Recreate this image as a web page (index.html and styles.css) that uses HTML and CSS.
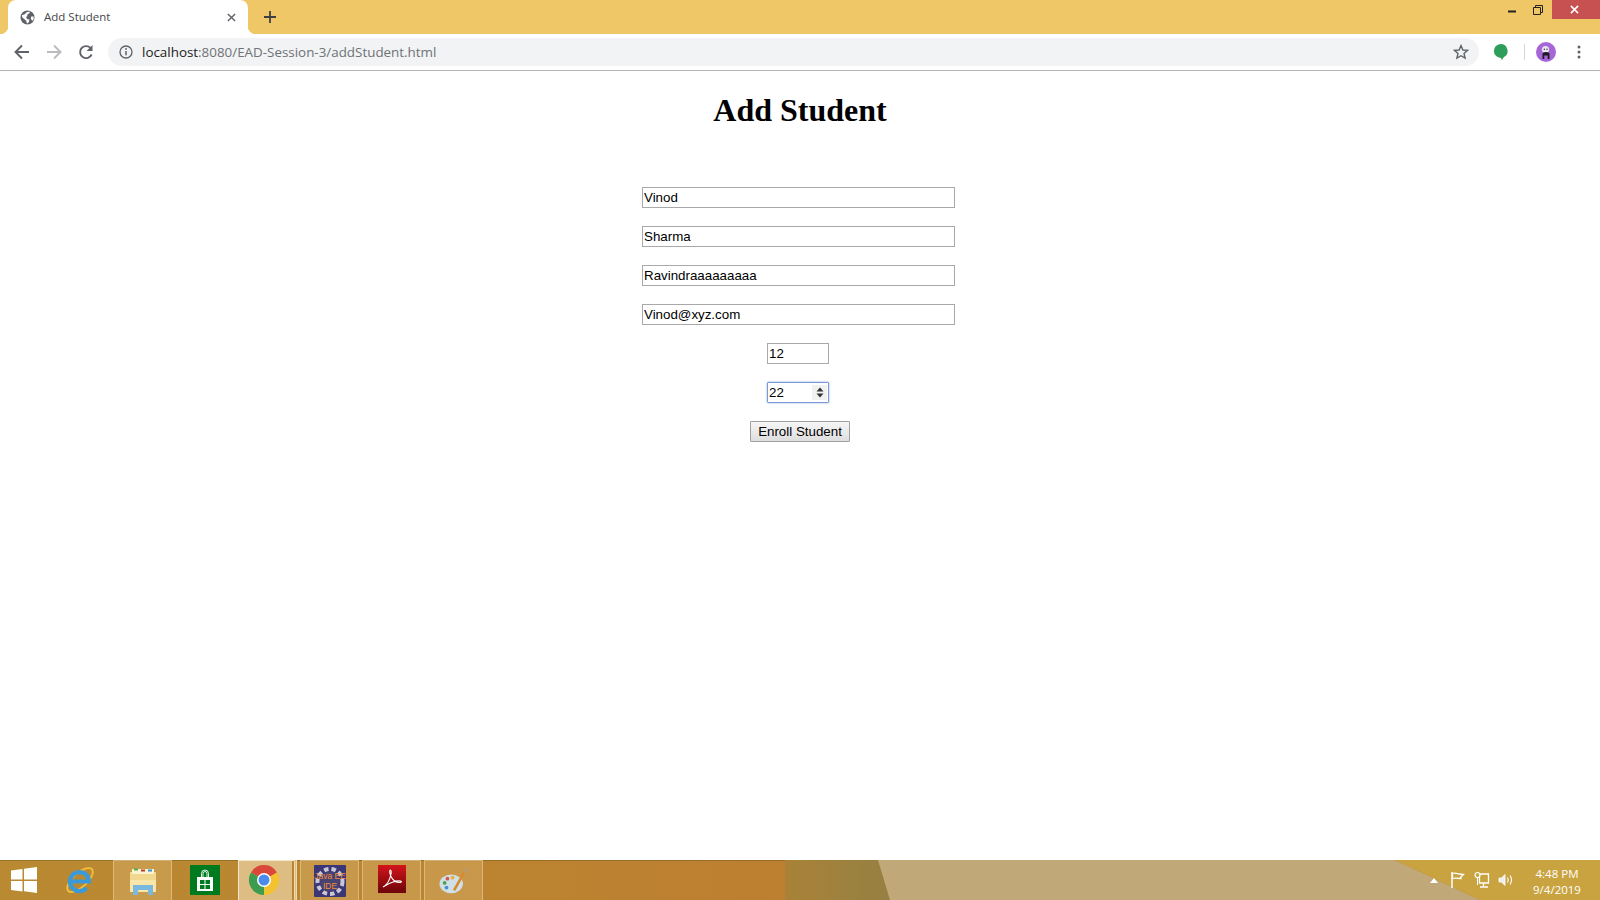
FILE: index.html
```html
<!DOCTYPE html>
<html lang="en">
<head>
    <meta charset="UTF-8">
    <title>Add Student</title>
    <link rel="stylesheet" href="styles.css">
</head>
<body>
    <!-- Browser chrome -->
    <header class="browser">
        <div class="tabstrip">
            <div class="tab">
                <svg class="tab-icon" viewBox="0 0 16 16"><circle cx="8" cy="8" r="7.5" fill="#5f6368"/><path d="M2 5.5 5 4.5 7.5 2 10.5 1.5 10 3.5 7.5 5 8 6.5 6.5 7.5 7.5 9.5 10 10 9.5 13 7.5 14.5 6.5 11.5 4.5 9.5 2.5 8z" fill="#fff"/><path d="M12 7h2.500v3L13 11.500 11.500 9z" fill="#fff"/></svg>
                <span class="tab-title">Add Student</span>
                <svg class="tab-close" viewBox="0 0 10 10"><path d="M1 1l8 8M9 1l-8 8" stroke="#5f6368" stroke-width="1.6"/></svg>
            </div>
            <svg class="new-tab" viewBox="0 0 12 12"><path d="M6 0v12M0 6h12" stroke="#3c3f43" stroke-width="1.8"/></svg>
            <div class="window-controls">
                <svg class="win-min" viewBox="0 0 8 3"><rect width="8" height="2" y="0.5" fill="#222"/></svg>
                <svg class="win-restore" viewBox="0 0 10 10"><path d="M0.5 2.5h7v7h-7zM2.5 2.5V0.5h7v7H7.5" fill="none" stroke="#222"/></svg>
                <div class="win-close"><svg viewBox="0 0 10 10"><path d="M1 1l8 8M9 1l-8 8" stroke="#fff" stroke-width="1.7"/></svg></div>
            </div>
        </div>
        <div class="toolbar">
            <svg class="nav-btn" viewBox="0 0 16 16"><path d="M15 8H2.5M8 1.5 1.5 8 8 14.5" fill="none" stroke="#5f6368" stroke-width="1.9"/></svg>
            <svg class="nav-btn" viewBox="0 0 16 16"><path d="M1 8h12.5M8 1.5 14.5 8 8 14.5" fill="none" stroke="#b9bbbe" stroke-width="1.9"/></svg>
            <svg class="nav-btn" viewBox="0 0 16 16"><path d="M13.6 10.5A6 6 0 1 1 12.3 3.8" fill="none" stroke="#5f6368" stroke-width="1.9"/><path d="M14.5 1v6h-6z" fill="#5f6368"/></svg>
            <div class="omnibox">
                <svg class="info-icon" viewBox="0 0 14 14"><circle cx="7" cy="7" r="6" fill="none" stroke="#5f6368" stroke-width="1.3"/><path d="M7 6v4.2" stroke="#5f6368" stroke-width="1.5"/><circle cx="7" cy="4" r="0.9" fill="#5f6368"/></svg>
                <span class="url"><span class="url-host">localhost</span>:8080/EAD-Session-3/addStudent.html</span>
                <svg class="star-icon" viewBox="0 0 16 16"><path d="M8 1.6 9.9 6l4.7.4-3.6 3.1 1.1 4.6L8 11.7l-4.1 2.4L5 9.5 1.4 6.4 6.1 6z" fill="none" stroke="#5f6368" stroke-width="1.4"/></svg>
            </div>
            <svg class="ext-icon" viewBox="0 0 14 16"><path d="M7 0.5a6.5 6.5 0 0 1 3.2 12.2L8.2 15.6 7.6 13.5A6.5 6.5 0 0 1 7 0.5z" fill="#2f9e5b"/></svg>
            <div class="toolbar-sep"></div>
            <svg class="avatar" viewBox="0 0 20 20"><circle cx="10" cy="10" r="10" fill="#a666d8"/><circle cx="9.5" cy="7.5" r="3.6" fill="#e9e4ee"/><path d="M6.5 17v-5q0-2 3.5-2t3.5 2v5h-1.8v-3.5H8.3V17z" fill="#1c1a20"/><circle cx="8.3" cy="7.3" r=".7" fill="#333"/><circle cx="11" cy="7.3" r=".7" fill="#333"/></svg>
            <svg class="menu-icon" viewBox="0 0 4 14"><circle cx="2" cy="2" r="1.5" fill="#5f6368"/><circle cx="2" cy="7" r="1.5" fill="#5f6368"/><circle cx="2" cy="12" r="1.5" fill="#5f6368"/></svg>
        </div>
    </header>

    <!-- Page content -->
    <main class="page">
        <h1>Add Student</h1>
        <form class="student-form">
            <input class="text-field" type="text" value="Vinod">
            <input class="text-field" type="text" value="Sharma">
            <input class="text-field" type="text" value="Ravindraaaaaaaaa">
            <input class="text-field" type="text" value="Vinod@xyz.com">
            <input class="short-field" type="text" value="12">
            <div class="spin-field">
                <input class="spin-input" type="text" value="22">
                <span class="spin-btn"><svg viewBox="0 0 8 11"><path d="M4 0.5 7.5 4.5h-7zM4 10.5 0.5 6.5h7z" fill="#333"/></svg></span>
            </div>
            <button class="submit-btn" type="button">Enroll Student</button>
        </form>
    </main>

    <!-- Windows taskbar -->
    <footer class="taskbar">
        <svg class="wallpaper" viewBox="0 0 1600 40" preserveAspectRatio="none">
            <defs>
                <linearGradient id="olive" x1="0" y1="0" x2="1" y2="0"><stop offset="0" stop-color="#a98238"/><stop offset="1" stop-color="#958042"/></linearGradient>
            </defs>
            <polygon points="785,0 878,0 890,40 785,40" fill="url(#olive)"/>
            <polygon points="878,0 1395,0 1480,40 890,40" fill="#c1a878"/>
            <polygon points="1395,0 1600,0 1600,40 1480,40" fill="#c9a340"/>
        </svg>
        <div class="task-start">
            <svg class="start-logo" viewBox="0 0 26 26"><path d="M0 3.6 11.5 2v10.5H0zM13 1.8 26 0v12.5H13zM0 14h11.5v10.5L0 22.9zM13 14h13v12l-13-1.800z" fill="#fff"/></svg>
        </div>
        <div class="task-item task-ie">
            <svg class="task-icon" viewBox="0 0 30 30"><ellipse cx="15" cy="15" rx="16" ry="7" transform="rotate(-42 15 15)" fill="none" stroke="#eebc3a" stroke-width="2"/><path d="M6.500 16.500H24A9.500 9.500 0 1 0 21.500 23" fill="none" stroke="#3a9ad9" stroke-width="4.200"/></svg>
        </div>
        <div class="task-item task-active">
            <svg class="task-icon" viewBox="0 0 30 30"><path d="M2 6h26v20H2z" fill="#f0d88f"/><path d="M4 3h22v5H4z" fill="#fbf3d0"/><rect x="6" y="2.500" width="4" height="2" fill="#4caf50"/><rect x="13" y="3.500" width="4" height="2" fill="#c0392b"/><rect x="20" y="3.500" width="4" height="2" fill="#3a8fd0"/><path d="M2 14h26v12H2z" fill="#f8e6ab"/><path d="M5 19h20v10h-5v-5H10v5H5z" fill="#7ab8e0"/></svg>
        </div>
        <div class="task-item task-store">
            <svg class="task-icon" viewBox="0 0 30 30"><rect width="30" height="30" fill="#007a1e"/><path d="M11.500 12V8.500a3.500 3.500 0 0 1 7 0V12M13 12V8.500a2 2 0 0 1 4 0V12" fill="none" stroke="#fff" stroke-width=".9"/><path d="M7 12h16v14H7z" fill="#fff"/><path d="M10 15h4.500v4H10zM15.500 15H20v4h-4.500zM10 20h4.500v4H10zM15.500 20H20v4h-4.500z" fill="#007a1e"/></svg>
        </div>
        <div class="task-item task-current">
            <svg class="task-icon" viewBox="0 0 30 30"><circle cx="15" cy="15" r="15" fill="#e0c040"/><path d="M15 15 2 7.500A15 15 0 0 1 28 7.500z" fill="#d9483b"/><path d="M15 15 2 7.500A15 15 0 0 0 15 30z" fill="#3c9d50"/><path d="M15 15 28 7.500A15 15 0 0 1 15 30z" fill="#f2c230"/><circle cx="15" cy="15" r="7" fill="#fff"/><circle cx="15" cy="15" r="5.500" fill="#4b8bec"/></svg>
        </div>
        <div class="task-item task-running">
            <svg class="eclipse-icon" viewBox="0 0 32 32"><rect width="32" height="32" rx="1" fill="#3c3576"/><circle cx="16" cy="16.500" r="12.500" fill="none" stroke="#c8c8d4" stroke-width="4" stroke-dasharray="4.500 3"/><circle cx="16" cy="16.500" r="10" fill="#4a4270"/><text class="eclipse-text" x="16" y="14">Java EE</text><text class="eclipse-text" x="16" y="24">IDE</text></svg>
        </div>
        <div class="task-item task-running">
            <svg class="pdf-icon" viewBox="0 0 28 28"><defs><linearGradient id="pdfFill" x1="0" y1="0" x2="0" y2="1"><stop offset="0" stop-color="#d4141c"/><stop offset="1" stop-color="#6c0508"/></linearGradient></defs><rect width="28" height="28" fill="url(#pdfFill)"/><path d="M5 22c4-2 7-8 8-13 .4-2 .2-4-.6-4-1 0-.8 3 .4 6 1.500 3.500 4 6 8 6.500 2 .2 3-.5 2.500-1-.8-.8-5-.5-9 .8-3.500 1.200-7 3.500-9.300 4.700z" fill="none" stroke="#fff" stroke-width="1.100"/></svg>
        </div>
        <div class="task-item task-running">
            <svg class="task-icon" viewBox="0 0 32 32"><ellipse cx="13" cy="19" rx="12.500" ry="10" fill="#cfe0e8"/><circle cx="6" cy="18" r="2" fill="#4fa04f"/><circle cx="9" cy="13.500" r="2" fill="#d9534f"/><circle cx="14.500" cy="12.500" r="2" fill="#e8b030"/><circle cx="8" cy="23" r="2" fill="#4a8fd0"/><path d="M16 26 28 5" stroke="#d98a2b" stroke-width="2.800"/><path d="M26.500 7 28 1.500l3 1.500-2 5z" fill="#b89a70"/></svg>
        </div>
        <div class="tray">
            <svg class="tray-caret" viewBox="0 0 8 5"><path d="M4 0 8 5H0z" fill="#fff"/></svg>
            <svg class="tray-icon" viewBox="0 0 16 18"><path d="M2 1v16" stroke="#fff" stroke-width="1.500"/><path d="M2.500 2.500c3-1 5 .5 7 .5l4 .5-3 3 .5 1c-3 0-5-1-8.500 0z" fill="#c9a340" stroke="#fff" stroke-width="1.300"/></svg>
            <svg class="tray-icon" viewBox="0 0 16 18"><path d="M5.500 3h9v9h-9zM9.500 12v3M6 16h8" fill="none" stroke="#fff" stroke-width="1.300"/><circle cx="3.500" cy="4" r="2.500" fill="#c9a83f" stroke="#fff" stroke-width="1.200"/><path d="M3.500 6.500V14" stroke="#fff"/></svg>
            <svg class="tray-icon" viewBox="0 0 16 18"><path d="M1 7h2.500L7 3.500v11L3.500 11H1z" fill="#eee" stroke="#fff" stroke-width=".8"/><path d="M9.500 6.500q1.500 2.500 0 5M12 4.500q3 4.500 0 9" fill="none" stroke="#fff" stroke-width="1.100"/></svg>
            <div class="tray-clock">
                <span>4:48 PM</span>
                <span>9/4/2019</span>
            </div>
        </div>
    </footer>
</body>
</html>
```

FILE: styles.css
```css
/* General styles */
html, body {
    height: 100%;
}

body {
    margin: 0;
    height: 100vh;
    display: flex;
    flex-direction: column;
    overflow: hidden;
    background-color: #fff;
    font-family: "Liberation Sans", Arial, sans-serif;
}

/* Tab strip */
.browser {
    flex: none;
    border-bottom: 1px solid #b4b4b4;
}

.tabstrip {
    height: 34px;
    display: flex;
    align-items: center;
    padding-left: 8px;
    background-color: #efc766;
}

.tab {
    position: relative;
    width: 240px;
    height: 34px;
    box-sizing: border-box;
    padding: 0 12px 0 13px;
    display: flex;
    align-items: center;
    background-color: #fff;
    border-radius: 8px 8px 0 0;
}

.tab::before,
.tab::after {
    content: "";
    position: absolute;
    bottom: 0;
    width: 8px;
    height: 8px;
}

.tab::before {
    left: -8px;
    background-image: radial-gradient(circle at 0 0, #efc766 8px, #fff 8.5px);
}

.tab::after {
    right: -8px;
    background-image: radial-gradient(circle at 100% 0, #efc766 8px, #fff 8.5px);
}

.tab-icon {
    width: 15px;
    height: 15px;
    margin-left: -1px;
}

.tab-title {
    flex: 1;
    margin: 0 0 2px 9px;
    font-family: "Open Sans", sans-serif;
    font-size: 11.5px;
    color: #45474a;
}

.tab-close {
    width: 9px;
    height: 9px;
}

.new-tab {
    width: 12px;
    height: 12px;
    margin-left: 16px;
}

.window-controls {
    margin-left: auto;
    align-self: flex-start;
    display: flex;
    align-items: flex-start;
}

.win-min {
    width: 8px;
    height: 3px;
    margin: 10px 17px 0 0;
}

.win-restore {
    width: 10px;
    height: 10px;
    margin: 5px 9px 0 0;
}

.win-close {
    width: 48px;
    height: 19px;
    box-sizing: border-box;
    padding-right: 3px;
    display: flex;
    align-items: center;
    justify-content: center;
    background-color: #c75050;
}

.win-close svg {
    width: 9px;
    height: 9px;
}

/* Toolbar */
.toolbar {
    height: 36px;
    box-sizing: border-box;
    padding: 0 15px 0 14px;
    display: flex;
    align-items: center;
    background-color: #fff;
}

.nav-btn {
    width: 16px;
    height: 16px;
    margin-right: 16px;
}

.omnibox {
    width: 1371px;
    height: 28px;
    margin-left: -2px;
    box-sizing: border-box;
    padding: 0 10px 0 11px;
    display: flex;
    align-items: center;
    background-color: #f1f3f4;
    border-radius: 14px;
}

.info-icon {
    width: 14px;
    height: 14px;
}

.url {
    flex: 1;
    margin-left: 9px;
    font-family: "Open Sans", sans-serif;
    font-size: 13.4px;
    color: #6f7276;
}

.url-host {
    color: #222;
}

.star-icon {
    width: 16px;
    height: 16px;
}

.ext-icon {
    width: 15px;
    height: 18px;
    margin-left: 14px;
}

.toolbar-sep {
    width: 1px;
    height: 16px;
    margin-left: 16px;
    background-color: #d6d6d6;
}

.avatar {
    width: 20px;
    height: 20px;
    margin-left: 11px;
}

.menu-icon {
    width: 4px;
    height: 14px;
    margin-left: 21px;
}

/* Page content */
.page {
    flex: 1;
    min-height: 0;
}

h1 {
    margin: 21px 0 0;
    font-family: "Liberation Serif", "Times New Roman", serif;
    font-size: 32px;
    font-weight: bold;
    line-height: 37px;
    text-align: center;
    color: #000;
}

.student-form {
    margin-top: 58px;
    display: flex;
    flex-direction: column;
    align-items: center;
    gap: 18px;
}

.student-form input,
.submit-btn {
    font-family: "Liberation Sans", Arial, sans-serif;
    font-size: 13.33px;
    color: #000;
}

.text-field,
.short-field {
    height: 21px;
    box-sizing: border-box;
    padding: 1px 1px;
    border: 1px solid #a9a9a9;
    outline: none;
    margin-right: 3px;
}

.text-field {
    width: 313px;
}

.short-field {
    width: 62px;
    margin-right: 4px;
}

.spin-field {
    width: 62px;
    height: 21px;
    margin-right: 4px;
    box-sizing: border-box;
    padding-right: 1px;
    display: flex;
    align-items: center;
    border: 1px solid #7b9bd8;
    box-shadow: 0 0 2px #7b9bd8;
    border-radius: 1px;
}

.spin-input {
    flex: 1;
    min-width: 0;
    padding: 0 1px;
    border: none;
    outline: none;
}

.spin-btn {
    width: 15px;
    height: 15px;
    display: flex;
    align-items: center;
    justify-content: center;
    background-color: #f1f1f1;
}

.spin-btn svg {
    width: 8px;
    height: 11px;
}

.submit-btn {
    width: 100px;
    height: 21px;
    padding: 0;
    border: 1px solid #a0a0a0;
    border-radius: 1px;
    background-image: linear-gradient(#f6f6f6, #dedede);
}

/* Taskbar */
.taskbar {
    position: relative;
    flex: none;
    height: 40px;
    display: flex;
    align-items: stretch;
    gap: 3px;
    background-image: linear-gradient(90deg, #b98a32, #bd7f30 50%);
    box-shadow: inset 0 1px 0 rgba(120, 90, 40, 0.5);
}

.wallpaper {
    position: absolute;
    left: 0;
    top: 0;
    width: 100%;
    height: 100%;
}

.task-start,
.task-item,
.tray {
    position: relative;
}

.task-start {
    width: 48px;
    display: flex;
    align-items: center;
    justify-content: center;
}

.start-logo {
    width: 26px;
    height: 26px;
}

.task-item {
    width: 59px;
    box-sizing: border-box;
    display: flex;
    align-items: center;
    justify-content: center;
}

.task-icon {
    width: 30px;
    height: 30px;
}

.eclipse-icon {
    width: 32px;
    height: 32px;
}

.pdf-icon {
    width: 28px;
    height: 28px;
    margin-bottom: 4px;
}

.task-ie {
    padding-right: 2px;
}

.task-store {
    width: 60px;
}

.task-active,
.task-running {
    background-color: rgba(240, 210, 150, 0.25);
    border: 1px solid rgba(240, 215, 165, 0.5);
    border-bottom: none;
}

.task-current {
    padding-right: 5px;
    border-right: 3px double rgba(240, 225, 190, 0.8);
    background-image: linear-gradient(90deg, rgba(245, 225, 185, 0.6) 54px, transparent 54px);
    box-shadow: inset 2px 2px 0 -1px #f3e7cc;
}

.eclipse-text {
    font-family: "Liberation Sans", Arial, sans-serif;
    font-size: 8.5px;
    text-anchor: middle;
    fill: #f0903c;
}

.tray {
    margin-left: auto;
    display: flex;
    align-items: center;
    padding-right: 13px;
}

.tray-caret {
    width: 8px;
    height: 5px;
    margin-right: 12px;
}

.tray-icon {
    width: 16px;
    height: 18px;
    margin-right: 8px;
}

.tray-clock {
    width: 60px;
    margin: 3px 0 0 5px;
    display: flex;
    flex-direction: column;
    align-items: center;
    gap: 1px;
    font-family: "Open Sans", sans-serif;
    font-size: 11.5px;
    line-height: 15px;
    color: #fff;
}
```
